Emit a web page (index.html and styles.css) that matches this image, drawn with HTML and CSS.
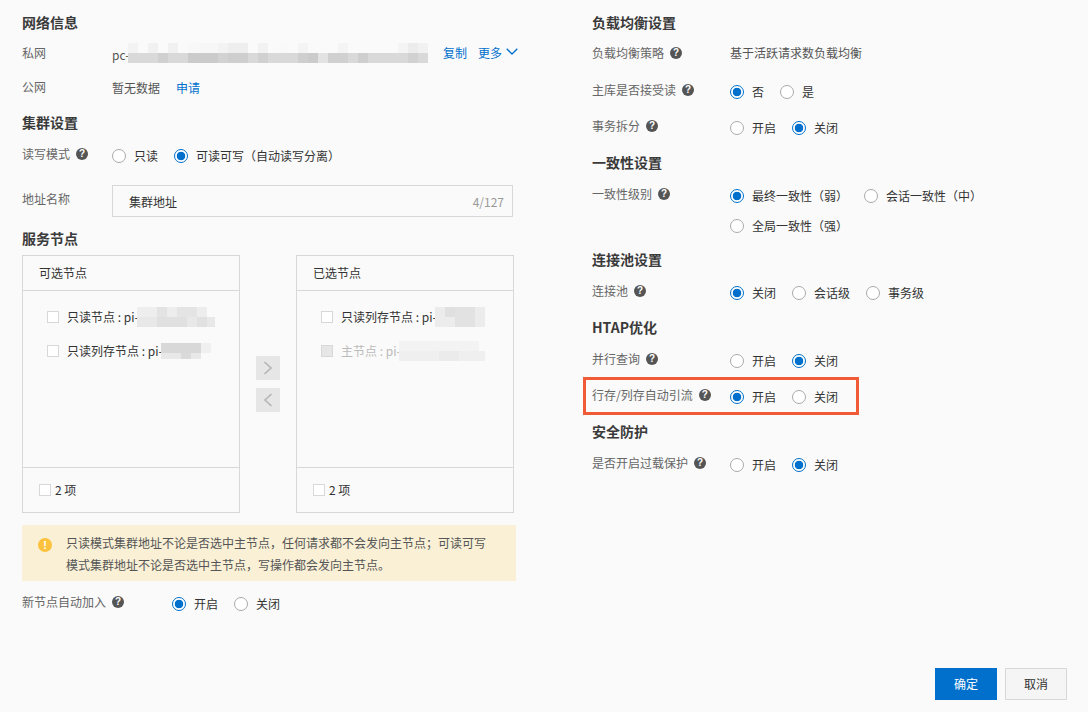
FILE: index.html
```html
<!DOCTYPE html>
<html lang="zh">
<head>
<meta charset="utf-8">
<title>集群设置</title>
<link rel="stylesheet" href="styles.css">
</head>
<body>
<div class="page">
  <div class="columns">
    <div class="col col-left">
      <h3 class="heading">网络信息</h3>
      <div class="row g10 lw90">
        <div class="label">私网</div>
        <div class="value conn">
          <span class="prefix">pc-</span>
          <svg class="mosaic" width="300" height="20" viewBox="0 0 300 20">
            <rect x="0" y="0" width="10" height="10" fill="#f3f3f3"/><rect x="20" y="0" width="10" height="10" fill="#f1f1f1"/><rect x="40" y="0" width="10" height="10" fill="#f1f1f1"/><rect x="60" y="0" width="10" height="10" fill="#f8f8f8"/><rect x="70" y="0" width="20" height="10" fill="#f7f7f7"/><rect x="90" y="0" width="10" height="10" fill="#f3f3f3"/><rect x="100" y="0" width="20" height="10" fill="#eeeeee"/><rect x="130" y="0" width="10" height="10" fill="#f2f2f2"/><rect x="150" y="0" width="10" height="10" fill="#f9f9f9"/><rect x="170" y="0" width="10" height="10" fill="#f4f4f4"/><rect x="210" y="0" width="10" height="10" fill="#f4f4f4"/><rect x="270" y="0" width="10" height="10" fill="#f4f4f4"/><rect x="280" y="0" width="10" height="10" fill="#ececec"/><rect x="290" y="0" width="10" height="10" fill="#f1f1f1"/>
            <rect x="0" y="10" width="300" height="10" fill="#d9d9d9"/><rect x="30" y="10" width="10" height="10" fill="#d0d0d0"/><rect x="60" y="10" width="30" height="10" fill="#cbcbcb"/><rect x="90" y="10" width="10" height="10" fill="#d2d2d2"/><rect x="100" y="10" width="20" height="10" fill="#cecece"/><rect x="130" y="10" width="10" height="10" fill="#d0d0d0"/><rect x="170" y="10" width="10" height="10" fill="#cfcfcf"/><rect x="180" y="10" width="10" height="10" fill="#cbcbcb"/><rect x="190" y="10" width="10" height="10" fill="#e3e3e3"/><rect x="200" y="10" width="20" height="10" fill="#d0d0d0"/><rect x="230" y="10" width="10" height="10" fill="#cecece"/><rect x="280" y="10" width="10" height="10" fill="#d1d1d1"/>
          </svg>
          <a class="link copy">复制</a>
          <a class="link more">更多</a>
          <svg class="chev" width="12" height="7" viewBox="0 0 12 7"><path d="M0.7 0.7 L6 6 L11.3 0.7" fill="none" stroke="#0070cc" stroke-width="1.3"/></svg>
        </div>
      </div>
      <div class="row g10 lw90">
        <div class="label">公网</div>
        <div class="value up1">暂无数据<a class="link apply">申请</a></div>
      </div>
      <h3 class="heading g12">集群设置</h3>
      <div class="row g11 lw90">
        <div class="label">读写模式<i class="help">?</i></div>
        <div class="radios">
          <label class="radio"><i class="dot"></i>只读</label>
          <label class="radio"><i class="dot on"></i>可读可写（自动读写分离）</label>
        </div>
      </div>
      <div class="row g17 lw90 input-row">
        <div class="label">地址名称</div>
        <div class="input"><span>集群地址</span><span class="count">4/127</span></div>
      </div>
      <h3 class="heading g12">服务节点</h3>
      <div class="transfer">
        <div class="panel">
          <div class="panel-head">可选节点</div>
          <div class="panel-list">
            <div class="item"><i class="check"></i><span>只读节点 : pi-</span>
              <svg class="blur blur-a" width="78" height="20" viewBox="0 0 78 20"><rect width="70" height="10" fill="#ededed"/><rect x="0" width="20" height="10" fill="#eeeeee"/><rect x="20" width="10" height="10" fill="#e3e3e3"/><rect x="40" width="20" height="10" fill="#e4e4e4"/><rect y="10" width="78" height="10" fill="#e8e8e8"/><rect x="20" y="10" width="30" height="10" fill="#e0e0e0"/><rect x="60" y="10" width="10" height="10" fill="#e1e1e1"/></svg></div>
            <div class="item"><i class="check"></i><span>只读列存节点 : pi-</span>
              <svg class="blur blur-b" width="50" height="16" viewBox="0 0 50 16"><rect width="50" height="10" fill="#f0f0f0"/><rect width="40" height="10" fill="#d8d8d8"/><rect y="10" width="40" height="6" fill="#e8e8e8"/><rect x="20" y="10" width="10" height="6" fill="#dadada"/></svg></div>
          </div>
          <div class="panel-foot"><i class="check"></i>2 项</div>
        </div>
        <div class="arrows">
          <button class="arrow"><svg width="10" height="14" viewBox="0 0 10 14"><path d="M1.5 1 L8 7 L1.5 13" fill="none" stroke="#b5b5b5" stroke-width="1.6"/></svg></button>
          <button class="arrow"><svg width="10" height="14" viewBox="0 0 10 14"><path d="M8.5 1 L2 7 L8.5 13" fill="none" stroke="#b5b5b5" stroke-width="1.6"/></svg></button>
        </div>
        <div class="panel">
          <div class="panel-head">已选节点</div>
          <div class="panel-list">
            <div class="item"><i class="check"></i><span>只读列存节点 : pi-</span>
              <svg class="blur blur-c" width="50" height="20" viewBox="0 0 50 20"><rect width="50" height="20" fill="#ececec"/><rect x="10" width="20" height="10" fill="#e0e0e0"/><rect x="20" y="0" width="20" height="20" fill="#e2e2e2"/></svg></div>
            <div class="item off"><i class="check"></i><span>主节点 : pi-</span>
              <svg class="blur blur-d" width="86" height="20" viewBox="0 0 86 20"><rect width="80" height="10" fill="#f3f3f3"/><rect y="10" width="86" height="10" fill="#efefef"/><rect x="40" y="10" width="20" height="10" fill="#ebebeb"/></svg></div>
          </div>
          <div class="panel-foot"><i class="check"></i>2 项</div>
        </div>
      </div>
      <div class="alert">
        <i class="warn">!</i>
        <p>只读模式集群地址不论是否选中主节点，任何请求都不会发向主节点；可读可写模式集群地址不论是否选中主节点，写操作都会发向主节点。</p>
      </div>
      <div class="row g11 lw150">
        <div class="label">新节点自动加入<i class="help">?</i></div>
        <div class="radios">
          <label class="radio"><i class="dot on"></i>开启</label>
          <label class="radio"><i class="dot"></i>关闭</label>
        </div>
      </div>
    </div>

    <div class="col col-right">
      <h3 class="heading">负载均衡设置</h3>
      <div class="row g10 lw138">
        <div class="label">负载均衡策略<i class="help">?</i></div>
        <div class="value up2">基于活跃请求数负载均衡</div>
      </div>
      <div class="row g13 lw138">
        <div class="label">主库是否接受读<i class="help">?</i></div>
        <div class="radios"><label class="radio"><i class="dot on"></i>否</label><label class="radio"><i class="dot"></i>是</label></div>
      </div>
      <div class="row g12 lw138">
        <div class="label">事务拆分<i class="help">?</i></div>
        <div class="radios"><label class="radio"><i class="dot"></i>开启</label><label class="radio"><i class="dot on"></i>关闭</label></div>
      </div>
      <h3 class="heading g13">一致性设置</h3>
      <div class="row g11 lw138 tall">
        <div class="label">一致性级别<i class="help">?</i></div>
        <div class="radios">
          <label class="radio"><i class="dot on"></i>最终一致性（弱）</label>
          <label class="radio"><i class="dot"></i>会话一致性（中）</label>
          <label class="radio"><i class="dot"></i>全局一致性（强）</label>
        </div>
      </div>
      <h3 class="heading g12">连接池设置</h3>
      <div class="row g11 lw138">
        <div class="label">连接池<i class="help">?</i></div>
        <div class="radios"><label class="radio"><i class="dot on"></i>关闭</label><label class="radio"><i class="dot"></i>会话级</label><label class="radio"><i class="dot"></i>事务级</label></div>
      </div>
      <h3 class="heading g13">HTAP优化</h3>
      <div class="row g11 lw138">
        <div class="label">并行查询<i class="help">?</i></div>
        <div class="radios"><label class="radio"><i class="dot"></i>开启</label><label class="radio"><i class="dot on"></i>关闭</label></div>
      </div>
      <div class="row g12 lw138 marked">
        <div class="label">行存/列存自动引流<i class="help">?</i></div>
        <div class="radios"><label class="radio"><i class="dot on"></i>开启</label><label class="radio"><i class="dot"></i>关闭</label></div>
      </div>
      <h3 class="heading g13">安全防护</h3>
      <div class="row g11 lw138">
        <div class="label">是否开启过载保护<i class="help">?</i></div>
        <div class="radios"><label class="radio"><i class="dot"></i>开启</label><label class="radio"><i class="dot on"></i>关闭</label></div>
      </div>
    </div>
  </div>
  <div class="footer">
    <button class="btn primary">确定</button>
    <button class="btn">取消</button>
  </div>
</div>
</body>
</html>
```
FILE: styles.css
```css
* { box-sizing: border-box; }
html, body { margin: 0; padding: 0; }
body {
  background: #fafafa;
  color: #333;
  font: 12px/20px "Noto Sans CJK SC", "Liberation Sans", sans-serif;
}
.page {
  height: 712px;
  overflow: hidden;
  display: flex;
  flex-direction: column;
  padding: 13px 21px 12px 22px;
}
.columns { flex: 1; display: flex; gap: 76px; }
.col-left { width: 494px; }
.col-right { flex: 1; }

.heading { margin: 0; height: 20px; font-size: 14px; line-height: 18px; font-weight: 700; color: #3a3a3a; }
.g10 { margin-top: 10px; }
.g11 { margin-top: 11px; }
.g12 { margin-top: 12px; }
.g13 { margin-top: 13px; }
.g17 { margin-top: 17px; }

.row { display: flex; align-items: flex-start; height: 24px; }
.row.tall { height: 54px; }
.label { flex: none; color: #666; display: flex; align-items: center; height: 20px; }
.lw90 .label { width: 90px; }
.lw138 .label { width: 138px; }
.lw150 .label { width: 150px; }
.help {
  flex: none;
  width: 12px;
  height: 12px;
  margin-left: 6px;
  border-radius: 50%;
  background: #555;
  color: #fff;
  font: 700 10px/12px "Liberation Sans", sans-serif;
  text-align: center;
}
.value { line-height: 24px; display: flex; align-items: center; height: 24px; color: #555; white-space: nowrap; }
.up1 { margin-top: -1px; }
.up2 { margin-top: -2px; }
.prefix { flex: none; width: 16px; }
.link { color: #0070cc; line-height: 20px; flex: none; }
.apply { margin-left: 16px; margin-top: -1px; }
.mosaic { margin-top: -4px; flex: none; }
.copy { margin-left: 15px; margin-top: -4px; }
.more { margin-left: 11px; margin-top: -4px; }
.chev { margin-left: 4px; margin-top: -8px; flex: none; }

.radios { display: flex; flex-wrap: wrap; gap: 6px 16px; flex: 1; }
.radio { display: flex; align-items: center; gap: 8px; height: 24px; color: #333; }
.dot {
  flex: none;
  width: 14px;
  height: 14px;
  border-radius: 50%;
  border: 1px solid #aaa;
  background: #fff;
}
.dot.on {
  border: 1.5px solid #0070cc;
  background: radial-gradient(circle, #0070cc 0, #0070cc 4px, #fff 4.6px);
}

.input-row { height: 32px; }
.input-row .label { margin-top: 4px; }
.input {
  flex: none;
  width: 401px;
  height: 32px;
  border: 1px solid #d7d8d9;
  background: #fafafa;
  padding: 2px 8px 0 16px;
  display: flex;
  align-items: center;
  justify-content: space-between;
}
.count { color: #999; }

.transfer { margin-top: 6px; display: flex; height: 258px; width: 492px; }
.panel { width: 218px; border: 1px solid #d7d8d9; display: flex; flex-direction: column; }
.panel-head { height: 35px; line-height: 34px; padding-left: 16px; border-bottom: 1px solid #d7d8d9; flex: none; }
.panel-list { flex: 1; padding: 9px 0 0 24px; }
.panel-foot { height: 45px; flex: none; border-top: 1px solid #d7d8d9; padding-left: 16px; display: flex; align-items: center; gap: 4px; }
.check { flex: none; width: 12px; height: 12px; border: 1px solid #d7d8d9; background: #fff; }
.item { height: 34px; display: flex; align-items: center; gap: 8px; white-space: nowrap; }
.item.off { color: #bbb; }
.item.off .check { background: #e6e6e6; }
.blur { flex: none; margin-left: -10px; }
.arrows { width: 56px; display: flex; flex-direction: column; align-items: center; justify-content: center; gap: 8px; }
.arrow { width: 24px; height: 24px; padding: 0; border: 0; background: #e6e6e6; display: flex; align-items: center; justify-content: center; }

.alert {
  margin-top: 12px;
  height: 56px;
  background: #f9f0d6;
  padding: 7px 24px 5px 16px;
  display: flex;
  gap: 14px;
}
.alert p { margin: 0; line-height: 22px; color: #555; flex: 1; }
.warn {
  flex: none;
  width: 14px;
  height: 14px;
  margin-top: 6px;
  border-radius: 50%;
  background: #fcc23d;
  color: #fff;
  font: 700 11px/14px "Liberation Sans", sans-serif;
  text-align: center;
}

.marked { position: relative; }
.marked::after {
  content: "";
  box-sizing: border-box;
  position: absolute;
  left: -9px;
  top: -8px;
  width: 276px;
  height: 38px;
  border: 3px solid #f05a34;
  pointer-events: none;
}

.footer { flex: none; display: flex; justify-content: flex-end; gap: 8px; }
.btn {
  width: 62px;
  height: 32px;
  padding: 0;
  font: inherit;
  border: 1px solid #d7d8d9;
  background: #f5f5f5;
  color: #333;
}
.btn.primary { background: #0070cc; border-color: #0070cc; color: #fff; }
```
